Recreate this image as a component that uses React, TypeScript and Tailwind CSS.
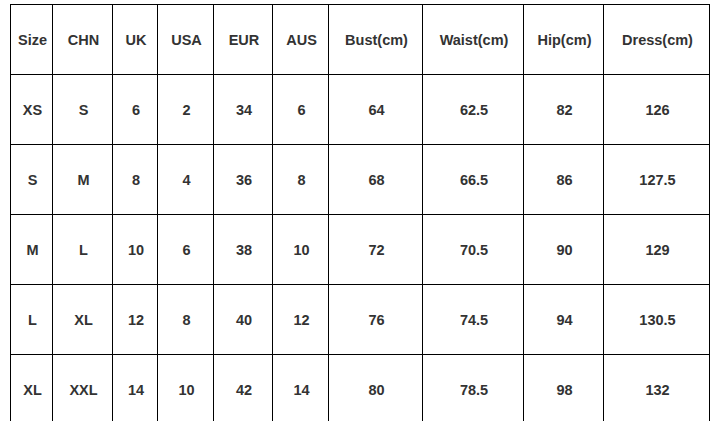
import React from 'react';

const headers = ['Size', 'CHN', 'UK', 'USA', 'EUR', 'AUS', 'Bust(cm)', 'Waist(cm)', 'Hip(cm)', 'Dress(cm)'];

const rows = [
  ['XS', 'S', '6', '2', '34', '6', '64', '62.5', '82', '126'],
  ['S', 'M', '8', '4', '36', '8', '68', '66.5', '86', '127.5'],
  ['M', 'L', '10', '6', '38', '10', '72', '70.5', '90', '129'],
  ['L', 'XL', '12', '8', '40', '12', '76', '74.5', '94', '130.5'],
  ['XL', 'XXL', '14', '10', '42', '14', '80', '78.5', '98', '132'],
];

function Cell({ children }: { children: React.ReactNode }) {
  return (
    <div className="flex h-[69px] items-center justify-center bg-white pt-[2px] pl-[2px] text-[14.5px] font-bold text-[#333]">
      {children}
    </div>
  );
}

export default function App() {
  return (
    <div className="h-[421px] w-[713px] overflow-hidden bg-white font-['Liberation_Sans',Arial,sans-serif]">
      <div className="ml-[10px] mt-[4px] inline-grid grid-cols-[41px_59px_44px_55px_58px_55px_93px_100px_79px_105px] gap-px bg-black p-px">
        {headers.map((h) => (
          <Cell key={h}>{h}</Cell>
        ))}
        {rows.map((r, i) =>
          r.map((v, j) => <Cell key={`${i}-${j}`}>{v}</Cell>)
        )}
      </div>
    </div>
  );
}
